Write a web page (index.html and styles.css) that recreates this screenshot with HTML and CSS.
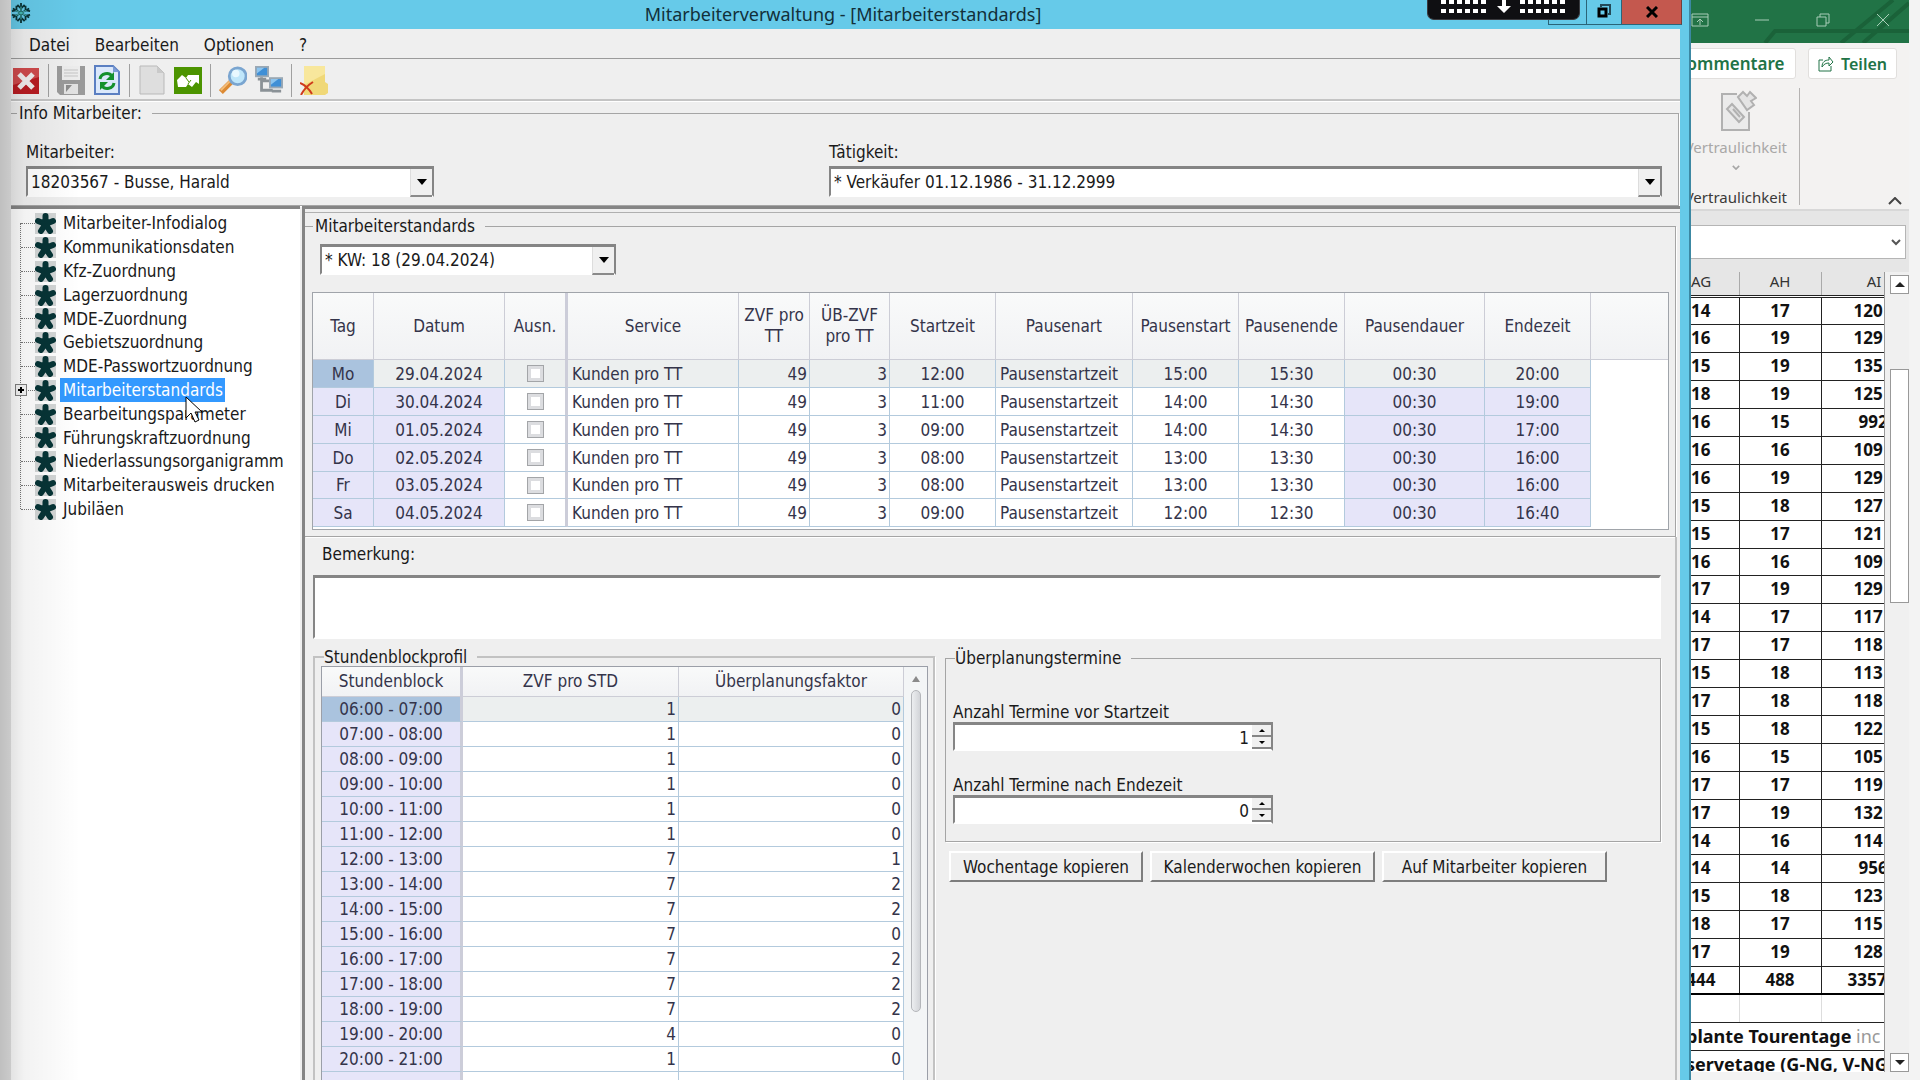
FILE: index.html
```html
<!DOCTYPE html>
<html lang="de">

<head>
    <meta charset="utf-8">
    <title>Mitarbeiterverwaltung - [Mitarbeiterstandards]</title>
    <link rel="stylesheet" href="styles.css">
</head>

<body>

    <!-- shared icons -->
    <svg class="defs" aria-hidden="true">
        <symbol id="star" viewBox="0 0 21 21">
            <rect width="21" height="21" fill="#d3d6d6" />
            <path d="M10.500 11V3M10.500 11L3 8M10.500 11L18 8M10.500 11L6 18M10.500 11L15 18" stroke="#063436" stroke-width="6" stroke-linecap="round" fill="none" />
        </symbol>
    </svg>

    <div class="desktop">

        <div class="app">
            <header class="titlebar">
                <svg class="app-icon" viewBox="0 0 22 22">
                    <g fill="none" stroke="#0b3437" stroke-width="2">
                        <path d="M11 0v22M2 6l18 10M20 6L2 16" />
                        <path d="M7 2l4 4 4-4M7 20l4-4 4 4M1 9l5-1V3M21 9l-5-1V3M1 13l5 1v5M21 13l-5 1v5" />
                    </g>
                    <path d="M11 4v14M5 8l12 6M17 8L5 14" stroke="#4fd0c8" stroke-width="1" />
                </svg>
                <h1>Mitarbeiterverwaltung - [Mitarbeiterstandards]</h1>
                <div class="win-buttons">
                    <button type="button" class="min" aria-label="Minimieren"></button>
                    <button type="button" class="restore" aria-label="Wiederherstellen">
                        <svg viewBox="0 0 14 14" width="14" height="14"><path d="M4 3V1h9v9h-2" fill="none" stroke="#234a58" stroke-width="2" /><rect x="2" y="5" width="7" height="7" fill="none" stroke="#000" stroke-width="3" /></svg>
                    </button>
                    <button type="button" class="close" aria-label="Schließen">
                        <svg viewBox="0 0 12 12" width="12" height="12"><path d="M1 1l10 10M11 1L1 11" stroke="#000" stroke-width="3" /></svg>
                    </button>
                </div>
                <div class="session-bar">
                    <span class="dots"></span>
                    <svg viewBox="0 0 14 14" width="14" height="14"><path d="M5 0h4v6h5l-7 7-7-7h5z" fill="#fff" /></svg>
                    <span class="dots"></span>
                </div>
            </header>

            <div class="client">
                <nav class="menu">
                    <a href="#">Datei</a>
                    <a href="#">Bearbeiten</a>
                    <a href="#">Optionen</a>
                    <a href="#">?</a>
                </nav>

                <div class="toolbar">
                    <button type="button" aria-label="Beenden">
                        <svg viewBox="0 0 28 30"><rect x="1" y="3" width="26" height="26" fill="#b81c22" /><path d="M1 3h26v9L1 20z" fill="#cf4a4c" /><path d="M7 9l14 14M21 9L7 23" stroke="#f1eeee" stroke-width="5" /></svg>
                    </button>
                    <i></i>
                    <button type="button" aria-label="Speichern">
                        <svg viewBox="0 0 28 30"><path d="M0 1h28v29H3l-3-3z" fill="#9a9a9a" /><rect x="5" y="1" width="18" height="14" fill="#ececec" /><path d="M7 5h14M7 8h14M7 11h14" stroke="#c4c4c4" /><rect x="7" y="19" width="14" height="10" fill="#e2e2e2" /><path d="M9 20h6l-6 7z" fill="#8c8c8c" /></svg>
                    </button>
                    <button type="button" aria-label="Aktualisieren">
                        <svg viewBox="0 0 28 30"><path d="M2 1h18l6 6v22H2z" fill="#dbe8fb" stroke="#5b7fc2" stroke-width="2" /><path d="M20 1v6h6z" fill="#7c9bd4" /><path d="M7 14c1-6 9-7 12-3" fill="none" stroke="#14902c" stroke-width="3" /><path d="M21 7v8h-8z" fill="#14902c" /><path d="M21 18c-1 6-9 7-12 3" fill="none" stroke="#14902c" stroke-width="3" /><path d="M7 25v-8h8z" fill="#14902c" /></svg>
                    </button>
                    <i></i>
                    <button type="button" aria-label="Neu">
                        <svg viewBox="0 0 28 30"><path d="M2 1h17l7 7v21H2z" fill="#dedede" stroke="#b9b9b9" /><path d="M19 1v7h7z" fill="#c9c9c9" /></svg>
                    </button>
                    <button type="button" aria-label="Wechseln">
                        <svg viewBox="0 0 28 30"><rect y="2" width="28" height="27" fill="#4c9400" /><path d="M3 15l5-5 4 3 2-3h11v9l-3-2-4 5-4-3-2 3H4z" fill="#fff" /><path d="M12 13l3 4M14 19l3-4" stroke="#4c9400" /></svg>
                    </button>
                    <i></i>
                    <button type="button" aria-label="Suchen">
                        <svg viewBox="0 0 30 30"><path d="M2 28l11-11" stroke="#dc8a34" stroke-width="6" /><path d="M2 26l10-10" stroke="#f3bd7a" stroke-width="2" /><circle cx="20" cy="11" r="9" fill="#bfe6fa" stroke="#7aa5d0" stroke-width="3" /><circle cx="18" cy="8" r="4" fill="#e9f8ff" /></svg>
                    </button>
                    <button type="button" aria-label="Netzwerk">
                        <svg viewBox="0 0 30 30"><path d="M7 12v14h12M8 16h8" fill="none" stroke="#8b9297" stroke-width="3" /><rect x="1" y="1" width="13" height="10" fill="#3f8fd6" stroke="#9aa8b4" stroke-width="2" /><rect x="16" y="13" width="13" height="10" fill="#3f8fd6" stroke="#9aa8b4" stroke-width="2" /><path d="M3 14h9M18 27h10" stroke="#8b9297" stroke-width="3" /><path d="M2 2h8L2 8zM17 14h8l-8 6z" fill="#8cc4ee" /></svg>
                    </button>
                    <i></i>
                    <button type="button" aria-label="Notiz löschen">
                        <svg viewBox="0 0 28 30"><path d="M4 1h21v16l3 2v9l-3 2H4z" fill="#f0d878" /><path d="M4 1h21v8L4 20z" fill="#f8e79c" /><path d="M0 18c5 2 9 6 12 11M13 17C8 20 4 24 1 30" fill="none" stroke="#cf3a1c" stroke-width="2" /></svg>
                    </button>
                </div>

                <fieldset class="info">
                    <legend>Info Mitarbeiter:</legend>
                    <div class="field">
                        <label for="mitarbeiter">Mitarbeiter:</label>
                        <div class="combo combo-ma"><select id="mitarbeiter"><option>18203567 - Busse, Harald</option></select></div>
                    </div>
                    <div class="field">
                        <label for="taetigkeit">Tätigkeit:</label>
                        <div class="combo"><select id="taetigkeit"><option>* Verkäufer 01.12.1986 - 31.12.2999</option></select></div>
                    </div>
                </fieldset>

                <div class="workspace">
                    <nav class="tree">
                        <ul>
                            <li><svg><use href="#star" /></svg><a href="#">Mitarbeiter-Infodialog</a></li>
                            <li><svg><use href="#star" /></svg><a href="#">Kommunikationsdaten</a></li>
                            <li><svg><use href="#star" /></svg><a href="#">Kfz-Zuordnung</a></li>
                            <li><svg><use href="#star" /></svg><a href="#">Lagerzuordnung</a></li>
                            <li><svg><use href="#star" /></svg><a href="#">MDE-Zuordnung</a></li>
                            <li><svg><use href="#star" /></svg><a href="#">Gebietszuordnung</a></li>
                            <li><svg><use href="#star" /></svg><a href="#">MDE-Passwortzuordnung</a></li>
                            <li class="selected">
                                <button type="button" class="expand" aria-label="Aufklappen"></button>
                                <svg><use href="#star" /></svg><a href="#">Mitarbeiterstandards</a>
                                <svg class="pointer" viewBox="0 0 18 28"><path d="M1 1v21l5-5 4 9 4-2-4-8h7z" fill="#fff" stroke="#000" stroke-width="1" /></svg>
                            </li>
                            <li><svg><use href="#star" /></svg><a href="#">Bearbeitungsparameter</a></li>
                            <li><svg><use href="#star" /></svg><a href="#">Führungskraftzuordnung</a></li>
                            <li><svg><use href="#star" /></svg><a href="#">Niederlassungsorganigramm</a></li>
                            <li><svg><use href="#star" /></svg><a href="#">Mitarbeiterausweis drucken</a></li>
                            <li><svg><use href="#star" /></svg><a href="#">Jubiläen</a></li>
                        </ul>
                    </nav>

                    <main class="content">
                        <fieldset class="standards">
                            <legend>Mitarbeiterstandards</legend>
                            <div class="combo combo-kw"><select aria-label="Kalenderwoche"><option>* KW: 18 (29.04.2024)</option></select></div>
                            <div class="grid-frame">
                                <table class="grid days">
                                    <colgroup>
                                        <col class="c-tag"><col class="c-datum"><col class="c-ausn"><col class="c-service"><col class="c-zvf"><col class="c-ueb"><col class="c-time"><col class="c-art"><col class="c-time"><col class="c-time"><col class="c-dauer"><col class="c-time"><col>
                                    </colgroup>
                                    <thead>
                                        <tr>
                                            <th>Tag</th><th>Datum</th><th class="split">Ausn.</th><th>Service</th><th>ZVF pro TT</th><th>ÜB-ZVF pro TT</th><th>Startzeit</th><th>Pausenart</th><th>Pausenstart</th><th>Pausenende</th><th>Pausendauer</th><th>Endezeit</th><th class="rest"></th>
                                        </tr>
                                    </thead>
                                    <tbody>
                                        <tr class="current"><td class="ro key">Mo</td><td class="ro">29.04.2024</td><td class="split"><input type="checkbox" aria-label="Ausnahme Mo"></td><td class="txt">Kunden pro TT</td><td class="num">49</td><td class="num">3</td><td>12:00</td><td class="txt">Pausenstartzeit</td><td>15:00</td><td>15:30</td><td class="ro">00:30</td><td class="ro">20:00</td><td class="rest"></td></tr>
                                        <tr><td class="ro key">Di</td><td class="ro">30.04.2024</td><td class="split"><input type="checkbox" aria-label="Ausnahme Di"></td><td class="txt">Kunden pro TT</td><td class="num">49</td><td class="num">3</td><td>11:00</td><td class="txt">Pausenstartzeit</td><td>14:00</td><td>14:30</td><td class="ro">00:30</td><td class="ro">19:00</td><td class="rest"></td></tr>
                                        <tr><td class="ro key">Mi</td><td class="ro">01.05.2024</td><td class="split"><input type="checkbox" aria-label="Ausnahme Mi"></td><td class="txt">Kunden pro TT</td><td class="num">49</td><td class="num">3</td><td>09:00</td><td class="txt">Pausenstartzeit</td><td>14:00</td><td>14:30</td><td class="ro">00:30</td><td class="ro">17:00</td><td class="rest"></td></tr>
                                        <tr><td class="ro key">Do</td><td class="ro">02.05.2024</td><td class="split"><input type="checkbox" aria-label="Ausnahme Do"></td><td class="txt">Kunden pro TT</td><td class="num">49</td><td class="num">3</td><td>08:00</td><td class="txt">Pausenstartzeit</td><td>13:00</td><td>13:30</td><td class="ro">00:30</td><td class="ro">16:00</td><td class="rest"></td></tr>
                                        <tr><td class="ro key">Fr</td><td class="ro">03.05.2024</td><td class="split"><input type="checkbox" aria-label="Ausnahme Fr"></td><td class="txt">Kunden pro TT</td><td class="num">49</td><td class="num">3</td><td>08:00</td><td class="txt">Pausenstartzeit</td><td>13:00</td><td>13:30</td><td class="ro">00:30</td><td class="ro">16:00</td><td class="rest"></td></tr>
                                        <tr><td class="ro key">Sa</td><td class="ro">04.05.2024</td><td class="split"><input type="checkbox" aria-label="Ausnahme Sa"></td><td class="txt">Kunden pro TT</td><td class="num">49</td><td class="num">3</td><td>09:00</td><td class="txt">Pausenstartzeit</td><td>12:00</td><td>12:30</td><td class="ro">00:30</td><td class="ro">16:40</td><td class="rest"></td></tr>
                                    </tbody>
                                </table>
                            </div>
                        </fieldset>

                        <section class="details">
                            <label for="bemerkung">Bemerkung:</label>
                            <textarea id="bemerkung"></textarea>

                            <div class="columns">
                                <fieldset class="profile">
                                    <legend>Stundenblockprofil</legend>
                                    <div class="block-frame">
                                        <table class="grid blocks">
                                            <colgroup><col class="c-block"><col class="c-std"><col></colgroup>
                                            <thead>
                                                <tr><th class="split">Stundenblock</th><th>ZVF pro STD</th><th>Überplanungsfaktor</th></tr>
                                            </thead>
                                            <tbody>
                                                <tr class="current"><td class="ro key split">06:00 - 07:00</td><td class="num">1</td><td class="num">0</td></tr>
                                                <tr><td class="ro split">07:00 - 08:00</td><td class="num">1</td><td class="num">0</td></tr>
                                                <tr><td class="ro split">08:00 - 09:00</td><td class="num">1</td><td class="num">0</td></tr>
                                                <tr><td class="ro split">09:00 - 10:00</td><td class="num">1</td><td class="num">0</td></tr>
                                                <tr><td class="ro split">10:00 - 11:00</td><td class="num">1</td><td class="num">0</td></tr>
                                                <tr><td class="ro split">11:00 - 12:00</td><td class="num">1</td><td class="num">0</td></tr>
                                                <tr><td class="ro split">12:00 - 13:00</td><td class="num">7</td><td class="num">1</td></tr>
                                                <tr><td class="ro split">13:00 - 14:00</td><td class="num">7</td><td class="num">2</td></tr>
                                                <tr><td class="ro split">14:00 - 15:00</td><td class="num">7</td><td class="num">2</td></tr>
                                                <tr><td class="ro split">15:00 - 16:00</td><td class="num">7</td><td class="num">0</td></tr>
                                                <tr><td class="ro split">16:00 - 17:00</td><td class="num">7</td><td class="num">2</td></tr>
                                                <tr><td class="ro split">17:00 - 18:00</td><td class="num">7</td><td class="num">2</td></tr>
                                                <tr><td class="ro split">18:00 - 19:00</td><td class="num">7</td><td class="num">2</td></tr>
                                                <tr><td class="ro split">19:00 - 20:00</td><td class="num">4</td><td class="num">0</td></tr>
                                                <tr><td class="ro split">20:00 - 21:00</td><td class="num">1</td><td class="num">0</td></tr>
                                                <tr><td class="ro split"></td><td class="num"></td><td class="num"></td></tr>
                                            </tbody>
                                        </table>
                                        <div class="slim-scroll"><span class="up"></span><span class="thumb"></span></div>
                                    </div>
                                </fieldset>

                                <div class="side">
                                    <fieldset class="termine">
                                        <legend>Überplanungstermine</legend>
                                        <label for="vor">Anzahl Termine vor Startzeit</label>
                                        <div class="spin">
                                            <input id="vor" type="text" inputmode="numeric" value="1">
                                            <div class="spin-buttons"><button type="button" aria-label="Mehr" class="inc"></button><button type="button" aria-label="Weniger" class="dec"></button></div>
                                        </div>
                                        <label for="nach">Anzahl Termine nach Endezeit</label>
                                        <div class="spin">
                                            <input id="nach" type="text" inputmode="numeric" value="0">
                                            <div class="spin-buttons"><button type="button" aria-label="Mehr" class="inc"></button><button type="button" aria-label="Weniger" class="dec"></button></div>
                                        </div>
                                    </fieldset>
                                    <div class="actions">
                                        <button type="button" class="b-tage">Wochentage kopieren</button>
                                        <button type="button" class="b-wide">Kalenderwochen kopieren</button>
                                        <button type="button" class="b-wide">Auf Mitarbeiter kopieren</button>
                                    </div>
                                </div>
                            </div>
                        </section>
                    </main>
                </div>
            </div>
        </div>

        <aside class="excel">
            <div class="xl-title">
                <svg class="xl-lines" viewBox="0 0 218 43"><path d="M74 43l10-12h134M150 43l52-43M172 43l46-40" fill="none" stroke="#1a6239" stroke-width="4" /></svg>
                <svg viewBox="0 0 18 14" width="18" height="14"><path d="M1 1h16v12H1zM1 4h16M9 12V6M6 9l3-3 3 3" fill="none" stroke="#a8cdb7" /></svg>
                <svg viewBox="0 0 14 14" width="14" height="14"><path d="M0 7h14" stroke="#a8cdb7" /></svg>
                <svg viewBox="0 0 14 14" width="14" height="14"><path d="M1 4h9v9H1zM4 4V1h9v9h-3" fill="none" stroke="#a8cdb7" /></svg>
                <svg viewBox="0 0 14 14" width="14" height="14"><path d="M1 1l12 12M13 1L1 13" stroke="#a8cdb7" /></svg>
            </div>
            <div class="xl-ribbon">
                <div class="xl-tabs">
                    <button type="button" class="comments">Kommentare</button>
                    <button type="button" class="share">
                        <svg viewBox="0 0 16 16" width="16" height="16"><path d="M5 4H1v11h12v-5M4 11c0-5 3-7 7-7V1l4 5-4 4V7C8 7 6 8 4 11z" fill="none" stroke="#217346" /></svg>
                        Teilen
                    </button>
                </div>
                <div class="xl-group">
                    <button type="button" class="confidential" disabled>
                        <svg class="stamp" viewBox="0 0 36 42" width="36" height="42"><path d="M16 4H1v36h27V22" fill="#ebebeb" stroke="#b1b1b1" stroke-width="2" /><path d="M11 14l12 13-5 5L6 19zM12 19l7 8" fill="#e4e4e4" stroke="#b1b1b1" stroke-width="2" /><path d="M17 7l5-5 4 4 3-4 6 6-5 3 3 4-7 5z" fill="#e4e4e4" stroke="#b1b1b1" stroke-width="2" /></svg>
                        <span>Vertraulichkeit</span>
                        <svg viewBox="0 0 10 6" width="8" height="5"><path d="M1 1l4 4 4-4" fill="none" stroke="#a6a6a6" stroke-width="2" /></svg>
                    </button>
                    <span class="group-name">Vertraulichkeit</span>
                </div>
                <svg class="collapse" viewBox="0 0 14 8" width="14" height="8"><path d="M1 7l6-6 6 6" fill="none" stroke="#444" stroke-width="2" /></svg>
            </div>
            <div class="xl-formula">
                <input type="text" aria-label="Bearbeitungsleiste">
                <svg viewBox="0 0 10 8" width="10" height="8"><path d="M1 2l4 4 4-4" fill="none" stroke="#555" stroke-width="2" /></svg>
            </div>
            <div class="xl-body">
                <div class="xl-sheet">
                    <table>
                        <colgroup><col class="x-ag"><col class="x-ah"><col class="x-ai"></colgroup>
                        <thead><tr><th>AG</th><th>AH</th><th>AI</th></tr></thead>
                        <tbody>
                            <tr><td>14</td><td>17</td><td>120</td></tr>
                            <tr><td>16</td><td>19</td><td>129</td></tr>
                            <tr><td>15</td><td>19</td><td>135</td></tr>
                            <tr><td>18</td><td>19</td><td>125</td></tr>
                            <tr><td>16</td><td>15</td><td class="short">992</td></tr>
                            <tr><td>16</td><td>16</td><td>109</td></tr>
                            <tr><td>16</td><td>19</td><td>129</td></tr>
                            <tr><td>15</td><td>18</td><td>127</td></tr>
                            <tr><td>15</td><td>17</td><td>121</td></tr>
                            <tr><td>16</td><td>16</td><td>109</td></tr>
                            <tr><td>17</td><td>19</td><td>129</td></tr>
                            <tr><td>14</td><td>17</td><td>117</td></tr>
                            <tr><td>17</td><td>17</td><td>118</td></tr>
                            <tr><td>15</td><td>18</td><td>113</td></tr>
                            <tr><td>17</td><td>18</td><td>118</td></tr>
                            <tr><td>15</td><td>18</td><td>122</td></tr>
                            <tr><td>16</td><td>15</td><td>105</td></tr>
                            <tr><td>17</td><td>17</td><td>119</td></tr>
                            <tr><td>17</td><td>19</td><td>132</td></tr>
                            <tr><td>14</td><td>16</td><td>114</td></tr>
                            <tr><td>14</td><td>14</td><td class="short">956</td></tr>
                            <tr><td>15</td><td>18</td><td>123</td></tr>
                            <tr><td>18</td><td>17</td><td>115</td></tr>
                            <tr><td>17</td><td>19</td><td>128</td></tr>
                            <tr class="total"><td>444</td><td>488</td><td class="long">3357</td></tr>
                            <tr class="blank"><td></td><td></td><td></td></tr>
                            <tr class="note"><td colspan="3">plante Tourentage <span>inc</span></td></tr>
                            <tr class="note"><td colspan="3">servetage (G-NG, V-NG</td></tr>
                        </tbody>
                    </table>
                </div>
                <div class="xl-scroll">
                    <button type="button" class="up" aria-label="Nach oben"></button>
                    <span class="thumb"></span>
                    <button type="button" class="down" aria-label="Nach unten"></button>
                </div>
            </div>
        </aside>

    </div>

</body>

</html>
```
FILE: styles.css
```css
* {
    box-sizing: border-box;
}

body {
    margin: 0;
    height: 100vh;
    overflow: hidden;
    background-color: #f3f3f3;
    font-family: "DejaVu Sans Condensed", "Noto Sans", sans-serif;
    font-size: 17px;
    line-height: 20px;
    color: #1a1a1a;
}

button, input, select, textarea {
    font: inherit;
    color: inherit;
    margin: 0;
    padding: 0;
    border-radius: 0;
}

a {
    color: inherit;
    text-decoration: none;
}

fieldset {
    margin: 0;
    min-width: 0;
    border: 1px solid #a5a5a5;
    box-shadow: 1px 1px 0 #fff;
}

legend {
    padding: 0 10px 0 0;
}

.defs {
    display: none;
}

.desktop {
    display: flex;
    height: 100vh;
    padding-left: 11px;
    background-color: #e4e4e4;
}

/* soft shade along the left edge of the screen */
.desktop::after {
    content: "";
    position: absolute;
    top: 0;
    bottom: 0;
    left: 0;
    width: 80px;
    background: linear-gradient(to right, rgba(0, 0, 0, 0.16), rgba(0, 0, 0, 0.05) 30%, transparent);
    pointer-events: none;
}

/* ---------- application window ---------- */

.app {
    flex: 1;
    min-width: 0;
    display: flex;
    flex-direction: column;
    padding-right: 9px;
    background-color: #66cae9;
    border-right: 2px solid #3c88a3;
}

.titlebar {
    position: relative;
    display: grid;
    grid-template-columns: 1fr auto 1fr;
    height: 29px;
    margin-right: -9px;
}

.app-icon {
    width: 20px;
    height: 22px;
    margin-top: 2px;
}

.titlebar h1 {
    margin: 0;
    padding-right: 14px;
    font-family: "Noto Sans", sans-serif;
    font-size: 18px;
    font-weight: 400;
    line-height: 28px;
    color: #12303a;
}

.win-buttons {
    display: flex;
    justify-self: end;
    height: 25px;
    padding-right: 7px;
}

.win-buttons button {
    width: 38px;
    background-color: #66cae9;
    border: 1px solid #2b6478;
    border-top: 0;
    border-right: 0;
}

.win-buttons .restore {
    width: 35px;
}

.win-buttons .close {
    width: 61px;
    background-color: #c4584e;
    border-right: 1px solid #70403c;
}

.session-bar {
    position: absolute;
    top: 0;
    right: 109px;
    display: flex;
    align-items: flex-start;
    justify-content: space-between;
    width: 153px;
    height: 20px;
    padding: 0 13px;
    background-color: #0f0f12;
    border: 1px solid #3a3a3e;
    border-top: 0;
    border-radius: 0 0 7px 7px;
}

.session-bar .dots {
    width: 46px;
    height: 13px;
    background: conic-gradient(from 270deg at 5px 4px, #fff 90deg, transparent 0) 0 0 / 8px 9px;
}

.client {
    flex: 1;
    min-height: 0;
    display: flex;
    flex-direction: column;
    background-color: #efefef;
}

.menu {
    display: flex;
    gap: 25px;
    height: 30px;
    padding: 6px 18px 0;
    border-bottom: 1px solid #9b9b9b;
}

.toolbar {
    display: flex;
    align-items: center;
    gap: 8px;
    height: 42px;
    padding: 2px 0 0 1px;
    border-bottom: 2px solid #c4c4c4;
    box-shadow: 0 1px 0 #fff;
}

.toolbar button {
    width: 28px;
    height: 30px;
    border: 0;
    background: none;
}

.toolbar svg {
    display: block;
    width: 28px;
    height: 30px;
}

.toolbar i {
    width: 1px;
    height: 33px;
    background-color: #a0a0a0;
}

.info {
    display: grid;
    grid-template-columns: 803px 1fr;
    height: 105px;
    padding: 17px 16px 0 15px;
    margin-right: 1px;
    border-left: 0;
}

.info legend {
    padding-left: 8px;
    margin-left: -15px;
    line-height: 24px;
    background: linear-gradient(#a5a5a5, #a5a5a5) 0 12px / 6px 1px no-repeat;
}

.combo {
    position: relative;
    height: 31px;
    border: 2px solid #858585;
    border-top-width: 3px;
    border-bottom: 2px solid #fff;
}

.combo-ma {
    width: 408px;
}

.combo-kw {
    width: 296px;
}

.info label {
    display: block;
    margin-bottom: 4px;
}

.combo select {
    display: block;
    width: 100%;
    height: 26px;
    padding: 0 3px;
    border: 0;
    background-color: #fff;
    appearance: none;
}

.combo::after {
    content: "";
    position: absolute;
    top: 0;
    right: 0;
    width: 21px;
    height: 26px;
    background-color: #f0f0f0;
    border-left: 1px solid #ddd;
    border-bottom: 2px solid #8a8a8a;
    pointer-events: none;
}

.combo::before {
    content: "";
    position: absolute;
    z-index: 1;
    top: 10px;
    right: 5px;
    border: 5px solid transparent;
    border-top: 6px solid #000;
    border-bottom: 0;
    pointer-events: none;
}

.workspace {
    flex: 1;
    min-height: 0;
    display: flex;
    gap: 2px;
}

/* ---------- tree ---------- */

.tree {
    flex: 0 0 289px;
    padding-top: 2px;
    background-color: #fff;
    border-top: 3px solid #858585;
}

.tree ul {
    position: relative;
    margin: 0;
    padding: 0 0 0 10px;
    list-style: none;
}

.tree ul::before {
    content: "";
    position: absolute;
    top: 12px;
    bottom: 12px;
    left: 9px;
    border-left: 1px dotted #777;
}

.tree li {
    position: relative;
    display: flex;
    align-items: center;
    height: 24px;
}

.tree li:nth-child(5n) {
    height: 23px;
}

.tree li::before {
    content: "";
    width: 14px;
    border-top: 1px dotted #777;
}

.tree li > svg {
    width: 21px;
    height: 21px;
    margin-right: 4px;
}

.tree li a {
    padding: 1px 2px 1px 3px;
    line-height: 22px;
}

.tree .selected a {
    color: #fff;
    background-color: #3399ff;
}

.tree .expand {
    position: absolute;
    left: -6px;
    width: 12px;
    height: 12px;
    border: 1px solid #808080;
    background: linear-gradient(#000, #000) 50% 50% / 6px 2px no-repeat, linear-gradient(#000, #000) 50% 50% / 2px 6px no-repeat, #f6f6f6;
}

.tree .selected .pointer {
    position: absolute;
    z-index: 2;
    top: 18px;
    left: 164px;
    width: 18px;
    height: 28px;
}

/* ---------- content ---------- */

.content {
    flex: 1;
    min-width: 0;
    display: flex;
    flex-direction: column;
    padding-right: 4px;
    border-left: 3px solid #858585;
    border-top: 3px solid #858585;
    background: linear-gradient(#b0b0b0, #b0b0b0) 0 3px / 100% 1px no-repeat;
}

.standards {
    margin-top: 7px;
    height: 321px;
    padding: 8px 6px 0 7px;
    border-left: 0;
}

.standards legend {
    padding-left: 10px;
    margin-left: -7px;
    background: linear-gradient(#a5a5a5, #a5a5a5) 0 10px / 8px 1px no-repeat;
}

.standards .combo {
    margin-left: 8px;
}

.grid-frame {
    margin-top: 17px;
    height: 238px;
    background-color: #fff;
    border: 1px solid #a0a4aa;
}

.grid {
    width: 100%;
    table-layout: fixed;
    border-collapse: separate;
    border-spacing: 0;
    color: #34344a;
}

.grid th, .grid td {
    padding: 0;
    border-right: 1px solid #b3cadd;
    border-bottom: 1px solid #b3cadd;
    text-align: center;
    background-color: #fff;
}

.grid th {
    height: 67px;
    font-weight: 400;
    line-height: 21px;
    border-color: #cccdd6;
    background: linear-gradient(#f9fafa, #f1f2f4);
}

.grid td {
    height: 28px;
    line-height: 22px;
}

.grid .ro {
    background-color: #e6e5f9;
}

.grid .current td {
    background-color: #ecefef;
}

.grid .current .key {
    background-color: #aac3de;
}

.grid .split {
    border-right: 3px solid #cccdd9;
}

.grid .txt {
    padding-left: 4px;
    text-align: left;
    white-space: nowrap;
}

.grid .num {
    padding-right: 2px;
    text-align: right;
}

.days .rest {
    border-right: 0;
}

.days td.rest, .days .current .rest {
    border-bottom: 0;
    background-color: #fff;
}

.days tr:nth-child(5n) td {
    height: 27px;
}

.c-tag { width: 61px; }
.c-datum { width: 131px; }
.c-ausn { width: 63px; }
.c-service { width: 171px; }
.c-zvf { width: 71px; }
.c-ueb { width: 80px; }
.c-time { width: 106px; }
.c-art { width: 137px; }
.c-dauer { width: 140px; }
.c-block { width: 141px; }
.c-std { width: 216px; }

.grid input {
    display: block;
    width: 17px;
    height: 17px;
    margin: 0 auto;
    appearance: none;
    background-color: #fff;
    border: 1px solid #a3a5a8;
    box-shadow: inset 0 0 0 3px #dcdde0;
}

.details {
    flex: 1;
    min-height: 0;
    display: flex;
    flex-direction: column;
    padding: 7px 14px 0 8px;
    margin-right: -1px;
    border-right: 2px solid #c0c0c0;
}

.details > label {
    padding-left: 9px;
}

.details textarea {
    flex: 0 0 64px;
    margin-top: 11px;
    resize: none;
    background-color: #fff;
    border: 2px solid #858585;
    border-top-width: 3px;
    border-right-color: #fff;
    border-bottom-color: #fff;
}

.columns {
    flex: 1;
    min-height: 0;
    display: flex;
    align-items: flex-start;
    gap: 10px;
    margin-top: 9px;
}

.profile {
    flex: 0 0 622px;
    height: 480px;
    padding: 0 5px 0 6px;
    border-width: 2px;
    border-color: #c2c2c2;
}

.profile legend {
    margin-left: 3px;
    line-height: 18px;
}

.block-frame {
    display: flex;
    align-items: flex-start;
    height: 460px;
    border: 1px solid #9b9fa8;
    background-color: #f3f5f6;
}

.blocks th {
    height: 30px;
}

.blocks td {
    height: 25px;
}

.slim-scroll {
    flex: 0 0 23px;
    display: flex;
    flex-direction: column;
    align-items: center;
    padding-top: 9px;
}

.slim-scroll .up {
    border: 4px solid transparent;
    border-bottom: 6px solid #8a8a8a;
    border-top: 0;
}

.slim-scroll .thumb {
    width: 10px;
    height: 322px;
    margin-top: 8px;
    border: 1px solid #b4b6ba;
    border-radius: 5px;
    background: linear-gradient(to right, #eceef0, #d2d4d8);
}

.side {
    flex: 1;
    min-width: 0;
}

.termine {
    height: 194px;
    padding: 34px 8px 0 7px;
}

.termine legend {
    margin-left: 2px;
}

.termine label {
    display: block;
}

.spin {
    display: flex;
    width: 320px;
    height: 29px;
    margin-bottom: 24px;
    background-color: #fff;
    border: 2px solid #858585;
    border-top-width: 3px;
    border-bottom: 2px solid #fff;
}

.spin input {
    flex: 1;
    min-width: 0;
    padding: 2px 3px 0 0;
    border: 0;
    text-align: right;
}

.spin-buttons {
    display: flex;
    flex-direction: column;
    width: 19px;
}

.spin-buttons button {
    flex: 1;
    display: flex;
    align-items: center;
    justify-content: center;
    background-color: #f0f0f0;
    border: 0;
    border-bottom: 2px solid #858585;
}

.spin-buttons button::after {
    content: "";
    border: 3px solid transparent;
}

.spin-buttons .inc::after {
    border-top: 0;
    border-bottom-color: #000;
}

.spin-buttons .dec::after {
    border-bottom: 0;
    border-top-color: #000;
}

.actions {
    display: flex;
    gap: 7px;
    padding: 9px 0 0 4px;
}

.actions button {
    height: 31px;
    background-color: #efefef;
    border: 2px solid #7d7d7d;
    border-top-color: #fff;
    border-left-color: #fff;
    white-space: nowrap;
}

.actions .b-tage {
    width: 194px;
}

.actions .b-wide {
    width: 225px;
}

/* ---------- spreadsheet behind ---------- */

.excel {
    flex: 0 0 229px;
    display: flex;
    flex-direction: column;
    overflow: hidden;
    padding-right: 11px;
    background-color: #f3f3f3;
    font-family: "Noto Sans", sans-serif;
}

.xl-title {
    position: relative;
    display: flex;
    align-items: center;
    justify-content: space-between;
    height: 43px;
    padding: 0 19px 4px 0;
    background-color: #217346;
}

.xl-title svg {
    position: relative;
}

.xl-title .xl-lines {
    position: absolute;
    top: 0;
    right: 0;
    height: 43px;
}

.xl-ribbon {
    position: relative;
    height: 168px;
    background-color: #f3f2f1;
    border-bottom: 2px solid #d8d8d8;
}

.xl-tabs {
    display: flex;
    justify-content: flex-end;
    gap: 12px;
    padding: 5px 12px 0 0;
}

.xl-tabs button {
    display: flex;
    align-items: center;
    justify-content: center;
    gap: 7px;
    height: 31px;
    font-size: 16px;
    font-weight: 600;
    color: #217346;
    background-color: #fff;
    border: 1px solid #e1dfdd;
    border-radius: 3px;
}

.xl-tabs .share {
    width: 89px;
}

.xl-tabs .comments {
    width: 140px;
    margin-left: -40px;
    padding-left: 8px;
    font-size: 17px;
}

.xl-group {
    display: flex;
    flex-direction: column;
    align-items: flex-end;
    width: 109px;
    height: 117px;
    margin-top: 9px;
    padding-right: 12px;
    border-right: 1px solid #b5b3b2;
}

.confidential {
    display: flex;
    flex-direction: column;
    align-items: center;
    border: 0;
    background: none;
    color: #a9a8a7;
}

.confidential, .group-name {
    font-size: 15px;
}

.confidential .stamp {
    margin: 2px 0 3px 6px;
}

.confidential span {
    margin-bottom: 6px;
    line-height: 24px;
}

.group-name {
    margin-top: 17px;
    color: #3b3a39;
}

.collapse {
    position: absolute;
    right: 7px;
    bottom: 4px;
}

.xl-formula {
    position: relative;
    padding: 14px 3px 0 0;
    background-color: #e6e6e6;
}

.xl-formula input {
    display: block;
    width: 100%;
    height: 34px;
    border: 1px solid #b5b5b5;
    border-left: 0;
    background-color: #fff;
}

.xl-formula svg {
    position: absolute;
    right: 8px;
    bottom: 13px;
}

.xl-body {
    flex: 1;
    min-height: 0;
    display: flex;
    justify-content: space-between;
    margin-bottom: 8px;
    background-color: #f0f0f0;
    border-top: 13px solid #e6e6e6;
}

.xl-sheet {
    width: 194px;
    overflow: hidden;
    border-right: 1px solid #999;
    background-color: #fff;
}

.xl-sheet table {
    width: 236px;
    table-layout: fixed;
    border-collapse: collapse;
    font-size: 17px;
    font-weight: 700;
    color: #111;
}

.x-ag { width: 48px; }
.x-ah { width: 82px; }
.x-ai { width: 106px; }

.xl-sheet th {
    height: 24px;
    padding: 0 0 4px;
    font-size: 15px;
    line-height: 18px;
    font-weight: 400;
    color: #333;
    background-color: #e6e6e6;
    border-right: 1px solid #aaa;
    border-bottom: 3px double #222;
}

.xl-sheet th:first-child {
    padding-right: 32px;
}

.xl-sheet td {
    height: 28px;
    padding: 0;
    line-height: 24px;
    text-align: center;
    border: 1px solid #222;
    border-left: 0;
}

.xl-sheet tr:nth-child(10n) td {
    height: 27px;
}

.xl-sheet td:first-child {
    padding-right: 28px;
    text-align: right;
    direction: rtl;
}

.xl-sheet td:last-child {
    padding: 0 0 0 32px;
    text-align: left;
    direction: ltr;
}

.xl-sheet td.short {
    padding-left: 37px;
}

.xl-sheet td.long {
    padding-left: 26px;
}

.xl-sheet .total td {
    border-bottom: 2px solid #000;
}

.xl-sheet .total td:first-child {
    padding-right: 23px;
}

.xl-sheet .blank td {
    border-color: #000 #ddd #222;
}

.xl-sheet .note td:last-child {
    padding-left: 0;
    font-size: 18px;
    text-indent: -5px;
    white-space: nowrap;
}

.xl-sheet .note span {
    font-weight: 400;
    color: #999;
}

.xl-scroll {
    display: flex;
    flex-direction: column;
    width: 19px;
    padding-top: 3px;
}

.xl-scroll button {
    display: flex;
    align-items: center;
    justify-content: center;
    height: 19px;
    background-color: #fff;
    border: 1px solid #999;
}

.xl-scroll button::after {
    content: "";
    border: 5px solid transparent;
}

.xl-scroll .up::after {
    border-top: 0;
    border-bottom-color: #222;
}

.xl-scroll .down::after {
    border-bottom: 0;
    border-top-color: #222;
}

.xl-scroll .thumb {
    height: 234px;
    margin: 75px 0 auto;
    background-color: #fff;
    border: 1px solid #999;
}
```
